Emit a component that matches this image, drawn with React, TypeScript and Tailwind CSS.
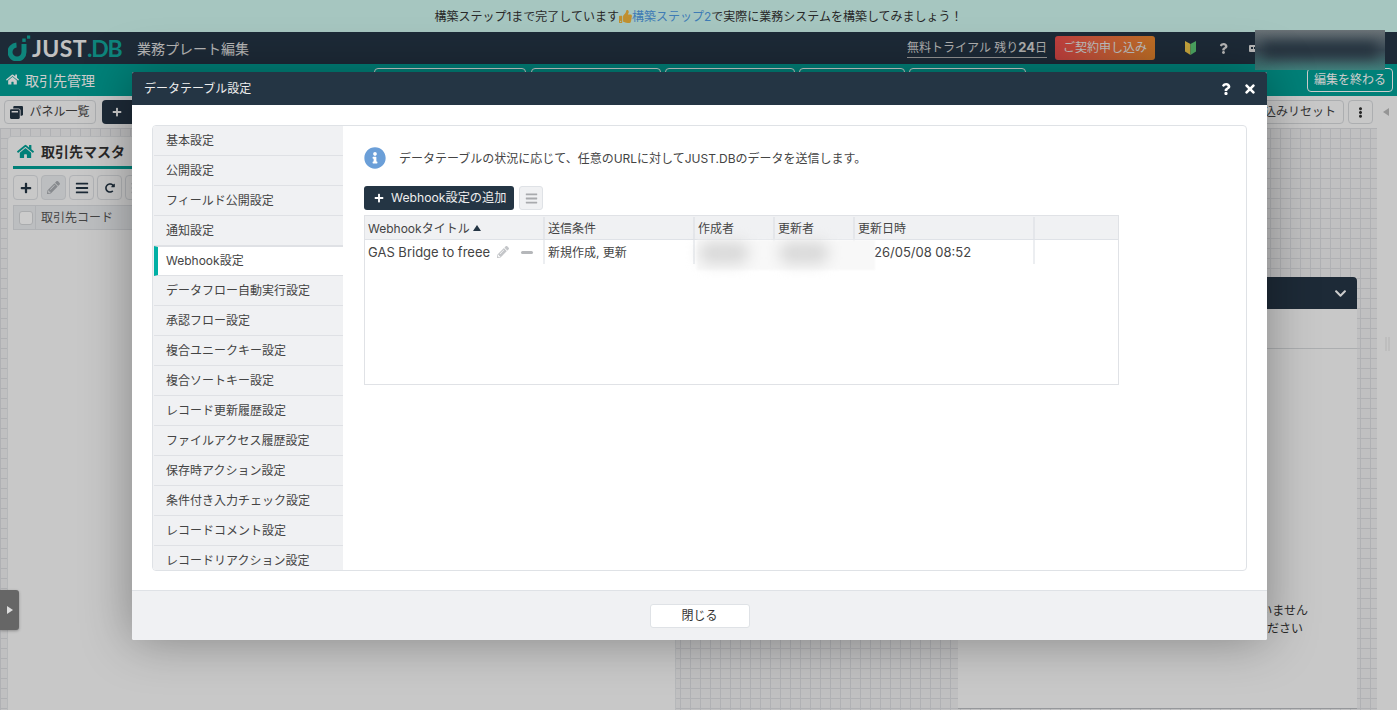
import {
  FaBars,
  FaChevronDown,
  FaEllipsisV,
  FaHome,
  FaInfoCircle,
  FaPencilAlt,
  FaPlus,
  FaQuestion,
  FaRedoAlt,
  FaThumbsUp,
  FaTimes,
  FaWindowRestore,
} from "react-icons/fa";

const settingsItems = [
  "基本設定",
  "公開設定",
  "フィールド公開設定",
  "通知設定",
  "Webhook設定",
  "データフロー自動実行設定",
  "承認フロー設定",
  "複合ユニークキー設定",
  "複合ソートキー設定",
  "レコード更新履歴設定",
  "ファイルアクセス履歴設定",
  "保存時アクション設定",
  "条件付き入力チェック設定",
  "レコードコメント設定",
  "レコードリアクション設定",
];

const tabWidths = ["w-[152px]", "w-[130px]", "w-[130px]", "w-[106px]", "w-[117px]"];

const columns = [
  { label: "送信条件", width: "w-[150px]" },
  { label: "作成者", width: "w-[80px]" },
  { label: "更新者", width: "w-[80px]" },
  { label: "更新日時", width: "w-[180px]" },
];

function Logo() {
  return (
    <div className="flex w-[129px] shrink-0 items-center">
      <svg aria-hidden="true" className="h-[26px] w-[24px] shrink-0" viewBox="0 0 24 26">
        <path
          d="M8.5 10 A7 7 0 1 0 16 17 L16 9"
          fill="none"
          stroke="#12a79c"
          strokeWidth="5"
        />
        <rect fill="#12a79c" height="3.4" width="3.4" x="14.3" y="3.5" />
        <rect fill="#12a79c" height="3.2" width="3.2" x="19" y="0.5" />
      </svg>
      <span className="text-[23px] leading-none font-bold tracking-[0.4px] text-[#f2f2f2] font-['Lato',sans-serif]">
        JUST
      </span>
      <span className="text-[23px] leading-none font-bold tracking-[-1.2px] text-[#12a79c] font-['Lato',sans-serif]">
        .DB
      </span>
    </div>
  );
}

function ToolButton({ children, muted }: { children: React.ReactNode; muted?: boolean }) {
  return (
    <span
      className={`flex size-[25px] shrink-0 items-center justify-center rounded border border-[#dcdfe3] text-[13px] ${
        muted ? "bg-[#eceef0] text-[#a9adb2]" : "bg-[#fafafa] text-[#243544]"
      }`}
    >
      {children}
    </span>
  );
}

function Background() {
  return (
    <div className="flex h-[710px] w-[1397px] flex-col overflow-hidden bg-[#fafafa]">
      <div className="flex h-8 shrink-0 items-center justify-center bg-[#d0f8f1] pt-px text-[12px] text-[#333]">
        構築ステップ1まで完了しています
        <FaThumbsUp className="size-[13px] text-[#f0b53c]" />
        <span className="text-[#4f9be3]">構築ステップ2</span>
        で実際に業務システムを構築してみましょう！
      </div>
      <div className="flex h-8 shrink-0 items-center bg-[#253545] pl-2">
        <Logo />
        <span className="shrink-0 text-[14px] text-[#e6e6e6]">業務プレート編集</span>
        <span className="ml-[658px] w-[140px] shrink-0 border-b border-[#bbb] text-center text-[12px] leading-[18px] whitespace-nowrap text-[#ddd]">
          無料トライアル 残り<b className="text-[13px]">24</b>日
        </span>
        <span className="ml-2 flex h-6 w-[100px] shrink-0 items-center justify-center rounded-[3px] bg-gradient-to-r from-[#f04e4e] to-[#ee8a2e] text-[12px] text-[#eee]">
          ご契約申し込み
        </span>
        <svg aria-hidden="true" className="ml-[30px] h-[14px] w-[11px] shrink-0" viewBox="0 0 11 14">
          <path d="M0 0 L5.5 3 L5.5 14 L0 10.5 Z" fill="#f8cf4d" />
          <path d="M11 0 L5.5 3 L5.5 14 L11 10.5 Z" fill="#5fd07a" />
        </svg>
        <FaQuestion className="ml-[22px] size-[11px] shrink-0 text-[#e6e6e6]" />
        <span className="ml-[20px] flex h-[7px] w-[8px] shrink-0 items-center justify-center gap-px rounded-[1px] bg-[#e6e6e6]">
          <span className="size-[2px] bg-[#253545]" />
          <span className="size-[2px] bg-[#253545]" />
        </span>
      </div>
      <div className="flex h-8 shrink-0 items-start bg-[#00a096] pr-[4px] pl-[6px]">
        <FaHome className="mt-[9px] size-[13px] shrink-0 text-white" />
        <span className="mt-[7px] ml-[6px] shrink-0 text-[14px] leading-5 text-white">取引先管理</span>
        <div className="mt-1 ml-[279px] flex shrink-0 gap-[4px]">
          {tabWidths.map((width, index) => (
            <span className={`${width} h-7 rounded-t border border-white ${index === 0 ? "mr-px" : ""}`} key={index} />
          ))}
        </div>
        <span className="mt-1 ml-auto flex h-6 w-[86px] shrink-0 items-center justify-center rounded border border-white text-[12px] text-white">
          編集を終わる
        </span>
      </div>
      <div className="flex h-8 shrink-0 items-center bg-[#fafafa] pl-1">
        <span className="flex h-6 w-[92px] shrink-0 items-center justify-center gap-[6px] rounded border border-[#d8dadd] text-[12px] text-[#444]">
          <FaWindowRestore className="size-[13px] text-[#243544]" />
          パネル一覧
        </span>
        <span className="ml-[6px] flex h-6 w-[80px] shrink-0 items-center rounded bg-[#253545] pl-[10px] text-white">
          <FaPlus className="size-[10px]" />
        </span>
        <span className="ml-[1062px] flex h-6 w-[100px] shrink-0 items-center justify-center rounded border border-[#d8dadd] text-[12px] text-[#444]">
          絞込みリセット
        </span>
        <span className="ml-1 flex h-6 w-[25px] shrink-0 items-center justify-center rounded border border-[#d8dadd] text-[#333]">
          <FaEllipsisV className="size-[11px]" />
        </span>
        <span className="ml-[10px] h-0 w-0 border-y-[4px] border-r-[6px] border-y-transparent border-r-[#bbb]" />
      </div>
      <div className="flex min-h-0 flex-1 bg-[#f0f0f2] bg-[linear-gradient(#dcdee1_1px,transparent_1px),linear-gradient(90deg,#dcdee1_1px,transparent_1px)] bg-[length:10px_10px] pl-2">
        <div className="mt-[9px] w-[667px] shrink-0 rounded-t bg-[#fafafa] pr-[6px] pl-[5px] shadow-[0_0_0_1px_#e4e6e9]">
          <div className="flex h-[32px] items-center gap-[7px] border-b-[3px] border-[#00a096] pl-[4px]">
            <FaHome className="size-[17px] text-[#00a096]" />
            <span className="text-[14px] font-bold text-[#333]">取引先マスタ</span>
          </div>
          <div className="mt-[6px] flex gap-[3px]">
            <ToolButton>
              <FaPlus className="size-[12px]" />
            </ToolButton>
            <ToolButton muted>
              <FaPencilAlt className="size-[13px]" />
            </ToolButton>
            <ToolButton>
              <FaBars className="size-[14px]" />
            </ToolButton>
            <ToolButton>
              <FaRedoAlt className="size-[10px]" />
            </ToolButton>
            <ToolButton>
              <FaBars className="size-[14px]" />
            </ToolButton>
          </div>
          <div className="mt-[5px] flex h-[25px] items-center border border-[#dcdfe3] bg-[#eceef1] pl-[5px] text-[12px] text-[#555]">
            <span className="size-[14px] rounded-[3px] border border-[#d5d7da] bg-white" />
            <span className="ml-[2px] border-l border-[#dcdfe3] pl-[5px] leading-[24px]">取引先コード</span>
          </div>
        </div>
        <div className="mt-[149px] mb-px ml-[283px] flex w-[399px] shrink-0 flex-col border-b border-[#bcbec2] bg-[#fafafa]">
          <div className="flex h-[32px] items-center justify-end rounded-t bg-[#253545] pr-[10px] text-white">
            <FaChevronDown className="size-[13px]" />
          </div>
          <div className="h-[40px] border-b border-[#d8dadd]" />
          <div className="mt-[253px] pr-[49px] text-right text-[12px] leading-[18px] text-[#333]">
            データが登録されていません
          </div>
          <div className="pr-[54px] text-right text-[12px] leading-[18px] text-[#333]">
            レコードを選択してください
          </div>
        </div>
        <div className="ml-[20px] flex w-[20px] shrink-0 items-center justify-center bg-[#fafafa] pb-[150px]">
          <span className="h-[14px] w-[5px] border-x-2 border-[#eeeeee]" />
        </div>
      </div>
    </div>
  );
}

function SettingsTable() {
  return (
    <div className="mt-[5px] h-[170px] w-[755px] border border-[#e0e2e6]">
      <div className="flex h-[24px] border-b border-[#dfe2e7] bg-[#f0f1f3] pt-px text-[12px] leading-[23px] text-[#444]">
        <span className="flex w-[180px] items-center border-r-2 border-[#e4e6ea] pl-[3px]">
          Webhookタイトル
          <span className="ml-[3px] h-0 w-0 border-x-[4px] border-b-[6px] border-x-transparent border-b-[#243544]" />
        </span>
        {columns.map((column) => (
          <span className={`${column.width} border-r-2 border-[#e4e6ea] pl-[3px]`} key={column.label}>
            {column.label}
          </span>
        ))}
      </div>
      <div className="flex h-[24px] text-[12px] leading-[25px] text-[#444]">
        <span className="flex w-[180px] items-center border-r-2 border-[#eceef1] pl-[3px] text-[13px]">
          GAS Bridge to freee
          <FaPencilAlt className="ml-[7px] size-[12px] text-[#c4c6c9]" />
          <span className="ml-[12px] h-[3px] w-[12px] rounded-sm bg-[#b5b7ba]" />
        </span>
        <span className="w-[150px] border-r-2 border-[#eceef1] pl-[3px]">新規作成, 更新</span>
        <span className="w-[80px] border-r-2 border-[#eceef1]" />
        <span className="w-[80px] border-r-2 border-[#eceef1]" />
        <span className="w-[180px] border-r-2 border-[#eceef1] pl-[19px] text-[13px]">26/05/08 08:52</span>
      </div>
    </div>
  );
}

export default function App() {
  return (
    <div className="relative h-[710px] w-[1397px] overflow-hidden font-['Inter','Noto_Sans_CJK_JP',sans-serif]">
      <Background />
      <div className="absolute inset-0 bg-black/20" />
      <div className="absolute top-[30px] left-[1255px] h-[40px] w-[130px] overflow-hidden bg-gradient-to-b from-[#6b7377] via-[#3a4a55] to-[#3f7f7b]">
        <div className="absolute inset-x-[8px] inset-y-[12px] bg-[#26343f] blur-[6px]" />
      </div>
      <div className="absolute top-[72px] left-[132px] flex h-[568px] w-[1135px] flex-col overflow-hidden rounded-[2px] bg-white shadow-[0_0_50px_rgba(0,0,0,0.35)]">
        <div className="flex h-[33px] shrink-0 items-center bg-[#243544] pr-[10px] pl-3 text-white">
          <span className="pt-px text-[12px] text-[#eee]">データテーブル設定</span>
          <FaQuestion className="ml-auto size-[12px]" />
          <FaTimes className="ml-[11px] size-[14px]" />
        </div>
        <div className="flex-1 px-5 pt-5 pb-[19px]">
          <div className="flex h-[446px] overflow-hidden rounded border border-[#dfe2e6]">
            <div className="h-full w-[190px] shrink-0 overflow-hidden bg-[#f0f1f3]">
              {settingsItems.map((item) =>
                item === "Webhook設定" ? (
                  <div
                    className="ml-px flex h-[30px] items-center border-y border-r-0 border-l-4 border-[#dfe1e5] border-l-[#00b0a5] bg-white pl-2 text-[12px] text-[#444]"
                    key={item}
                  >
                    {item}
                  </div>
                ) : (
                  <div
                    className="ml-px flex h-[30px] items-center border-b border-[#dfe1e5] pl-3 text-[12px] text-[#444]"
                    key={item}
                  >
                    {item}
                  </div>
                ),
              )}
            </div>
            <div className="min-w-0 flex-1 pt-[21px] pl-[21px]">
              <div className="flex h-[22px] items-center">
                <FaInfoCircle className="size-[22px] text-[#6b9fd8]" />
                <span className="ml-[13px] pt-px text-[12px] text-[#444]">
                  データテーブルの状況に応じて、任意のURLに対してJUST.DBのデータを送信します。
                </span>
              </div>
              <div className="mt-[17px] flex gap-[5px]">
                <span className="flex h-6 w-[150px] items-center rounded-[3px] bg-[#243544] pl-[10px] text-[12.2px] text-[#eee]">
                  <FaPlus className="mr-[7px] size-[10px] text-white" />
                  Webhook設定の追加
                </span>
                <span className="flex h-6 w-6 items-center justify-center rounded-[3px] border border-[#dfe2e6] bg-[#f0f1f3] text-[#a8aaad]">
                  <FaBars className="size-[13px]" />
                </span>
              </div>
              <SettingsTable />
            </div>
          </div>
        </div>
        <div className="flex h-[50px] shrink-0 items-center justify-center border-t border-[#dfe2e6] bg-[#f0f1f3]">
          <span className="flex h-[24px] w-[100px] items-center justify-center rounded-[3px] border border-[#dfe2e6] bg-white text-[12px] text-[#333]">
            閉じる
          </span>
        </div>
      </div>
      <div className="absolute top-[240px] left-[697px] h-[30px] w-[178px] bg-[#f8f8f8] blur-[1px]">
        <div className="absolute top-[2px] left-[2px] h-[22px] w-[50px] rounded-full bg-[#d9d9d9] blur-[7px]" />
        <div className="absolute top-[2px] left-[82px] h-[22px] w-[50px] rounded-full bg-[#d9d9d9] blur-[7px]" />
      </div>
      <div className="absolute top-[590px] left-0 flex h-10 w-[19px] items-center justify-center rounded-r-[3px] bg-[#666] shadow-[0_1px_3px_rgba(0,0,0,0.3)]">
        <span className="h-0 w-0 border-y-[4px] border-l-[6px] border-y-transparent border-l-[#ddd]" />
      </div>
    </div>
  );
}
